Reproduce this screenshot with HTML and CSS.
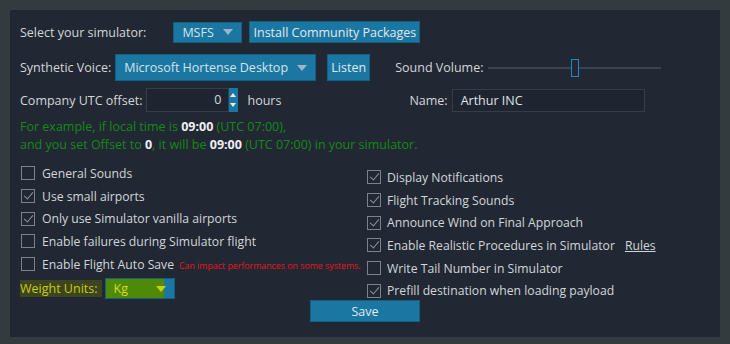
FILE: index.html
```html
<!DOCTYPE html>
<html lang="en">
<head>
    <meta charset="UTF-8">
    <title>Settings</title>
    <link rel="stylesheet" href="styles.css">
</head>
<body>
    <div id="panel">
        <div class="row row-sim">
            <span class="label">Select your simulator:</span>
            <div class="select sel-sim">MSFS<span class="arrow"></span></div>
            <button type="button" class="btn btn-install">Install Community Packages</button>
        </div>

        <div class="row row-voice">
            <span class="label">Synthetic Voice:</span>
            <div class="select sel-voice">Microsoft Hortense Desktop<span class="arrow"></span></div>
            <button type="button" class="btn btn-listen">Listen</button>
            <span class="label lbl-volume">Sound Volume:</span>
            <div class="slider"><div class="track"></div><div class="thumb"></div></div>
        </div>

        <div class="row row-utc">
            <span class="label">Company UTC offset:</span>
            <div class="numbox">0</div>
            <div class="spin"><span class="up"></span><span class="down"></span></div>
            <span class="label lbl-hours">hours</span>
            <span class="label lbl-name">Name:</span>
            <div class="textbox">Arthur INC</div>
        </div>

        <div class="hint">
            <p>For example, if local time is <b>09:00</b> (UTC 07:00),</p>
            <p>and you set Offset to <b>0</b>, it will be <b>09:00</b> (UTC 07:00) in your simulator.</p>
        </div>

        <div class="options">
            <div class="col col-left">
                <div class="check"><span class="box"></span>General Sounds</div>
                <div class="check on"><span class="box"></span>Use small airports</div>
                <div class="check on"><span class="box"></span>Only use Simulator vanilla airports</div>
                <div class="check"><span class="box"></span>Enable failures during Simulator flight</div>
                <div class="check"><span class="box"></span>Enable Flight Auto Save<span class="warn">Can impact performances on some systems.</span></div>
                <div class="weight">
                    <span class="lbl-weight">Weight Units:</span>
                    <div class="select sel-weight">Kg<span class="arrow"></span></div>
                </div>
            </div>
            <div class="col col-right">
                <div class="check on"><span class="box"></span>Display Notifications</div>
                <div class="check on"><span class="box"></span>Flight Tracking Sounds</div>
                <div class="check on"><span class="box"></span>Announce Wind on Final Approach</div>
                <div class="check on"><span class="box"></span>Enable Realistic Procedures in Simulator<a href="" class="rules">Rules</a></div>
                <div class="check"><span class="box"></span>Write Tail Number in Simulator</div>
                <div class="check on"><span class="box"></span>Prefill destination when loading payload</div>
            </div>
        </div>

        <div class="footer">
            <button type="button" class="btn btn-save">Save</button>
        </div>
    </div>
</body>
</html>
```

FILE: styles.css
```css
* {
    margin: 0;
    padding: 0;
    box-sizing: border-box;
}

body {
    background-color: #343b3e;
    font-family: "Open Sans", Arial, sans-serif;
    font-size: 12.5px;
    color: #d2d6da;
    padding: 10px 10px 0 10px;
    height: 344px;
    overflow: hidden;
}

#panel {
    background-color: #222833;
    width: 710px;
    height: 327px;
    padding: 11px 10px 0 10px;
}

.row {
    display: flex;
    align-items: center;
}

.label {
    white-space: nowrap;
}

.select {
    position: relative;
    background-color: #1a77a2;
    border: 1px solid #155f82;
    color: #d8e2ea;
    padding-left: 8px;
    display: flex;
    align-items: center;
    white-space: nowrap;
}

.arrow {
    position: absolute;
    right: 8px;
    top: 50%;
    margin-top: -3px;
    border-left: 5px solid transparent;
    border-right: 5px solid transparent;
    border-top: 6px solid #9fb4c4;
}

.btn {
    font-family: inherit;
    font-size: 12.5px;
    background-color: #1a77a2;
    border: 1px solid #155f82;
    color: #e2e8ee;
    cursor: pointer;
    white-space: nowrap;
}

.row-sim {
    height: 22px;
}

.sel-sim {
    margin-left: 27px;
    width: 69px;
    height: 21px;
}

.btn-install {
    margin-left: 7px;
    width: 171px;
    height: 22px;
}

.row-voice {
    margin-top: 11px;
    height: 27px;
}

.sel-voice {
    margin-left: 4px;
    width: 201px;
    height: 27px;
}

.btn-listen {
    margin-left: 11px;
    width: 43px;
    height: 27px;
}

.lbl-volume {
    margin-left: 25px;
}

.slider {
    position: relative;
    margin-left: 5px;
    width: 173px;
    height: 18px;
}

.track {
    position: absolute;
    left: 0;
    right: 0;
    top: 8px;
    height: 2px;
    background-color: #3a4450;
}

.thumb {
    position: absolute;
    left: 83px;
    top: 0;
    width: 8px;
    height: 18px;
    background-color: #222833;
    border: 1px solid #1e8ac4;
}

.row-utc {
    margin-top: 7px;
    height: 24px;
}

.numbox {
    margin-left: 3px;
    width: 83px;
    height: 24px;
    border: 1px solid #343e4a;
    background-color: #1f2530;
    text-align: right;
    padding-right: 6px;
    line-height: 22px;
}

.spin {
    width: 9px;
    height: 24px;
    background-color: #1a77a2;
    display: flex;
    flex-direction: column;
    justify-content: space-evenly;
    align-items: center;
}

.spin .up {
    border-left: 3px solid transparent;
    border-right: 3px solid transparent;
    border-bottom: 4px solid #e8eef2;
}

.spin .down {
    border-left: 3px solid transparent;
    border-right: 3px solid transparent;
    border-top: 4px solid #e8eef2;
}

.lbl-hours {
    margin-left: 10px;
}

.lbl-name {
    margin-left: 128px;
}

.textbox {
    margin-left: 4px;
    width: 193px;
    height: 23px;
    border: 1px solid #343e4a;
    background-color: #1f2530;
    padding-left: 8px;
    line-height: 21px;
    color: #dfe3e7;
}

.hint {
    margin-top: 6px;
    color: #138a13;
    line-height: 18px;
}

.hint b {
    color: #eef0f2;
}

.options {
    display: flex;
    margin-top: 8px;
    font-size: 12.2px;
}

.col-left {
    width: 346px;
}

.col-right {
    padding-top: 4px;
}

.check {
    display: flex;
    align-items: center;
    height: 22.7px;
    white-space: nowrap;
}

.box {
    position: relative;
    width: 14px;
    height: 14px;
    border: 1px solid #7a828c;
    margin-right: 7px;
    margin-left: 1px;
}

.check.on .box::after {
    content: "";
    position: absolute;
    left: 4px;
    top: 0px;
    width: 4px;
    height: 8px;
    border-right: 1px solid #8c949e;
    border-bottom: 1px solid #8c949e;
    transform: rotate(40deg);
}

.col-right .box {
    margin-right: 6px;
}

.warn {
    color: #e8141a;
    font-size: 8.8px;
    margin-left: 5px;
    margin-top: 3px;
}

.rules {
    color: #d2d6da;
    text-decoration: underline;
    margin-left: 10px;
}

.weight {
    display: flex;
    align-items: center;
    margin-top: 3px;
    height: 21px;
    font-size: 12.5px;
}

.lbl-weight {
    color: #c8cc10;
    background-color: #3c4420;
    padding-right: 4px;
}

.sel-weight {
    margin-left: 3px;
    width: 70px;
    height: 21px;
    color: #d6dc20;
    background: linear-gradient(to right, #4e8a08 0, #4e8a08 86%, #1a77a2 86%);
}

.sel-weight .arrow {
    border-top-color: #c8d010;
}

.footer {
    display: flex;
    justify-content: center;
    margin-top: -2px;
}

.btn-save {
    width: 110px;
    height: 22px;
}
```
